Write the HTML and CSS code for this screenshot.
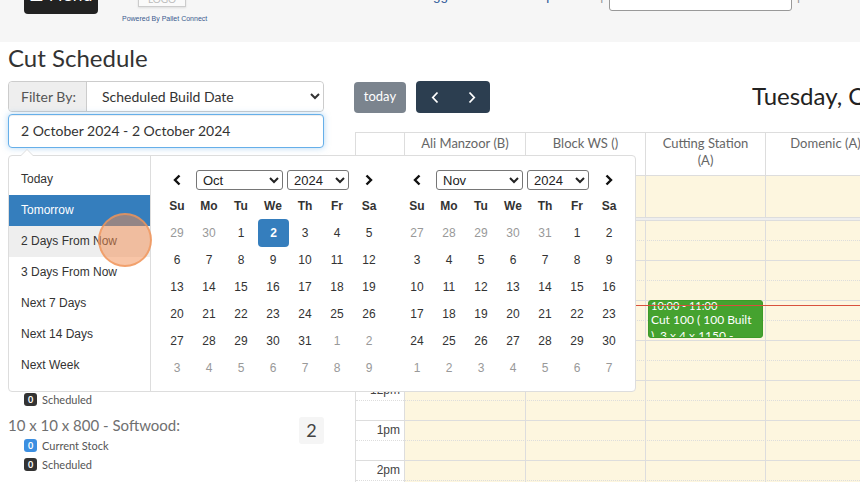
FILE: index.html
```html
<!DOCTYPE html>
<html lang="en">
<head>
    <meta charset="UTF-8">
    <meta name="viewport" content="width=device-width, initial-scale=1.0">
    <title>Cut Schedule</title>
    <link rel="stylesheet" href="styles.css">
</head>
<body>

<div class="topbar">
    <button class="menu-btn">&#9776; Menu</button>
    <div class="brand">
        <div class="logo">LOGO</div>
        <div class="powered">Powered By Pallet Connect</div>
    </div>
    <div class="account">
        <a href="#" class="account-link">Logged in As Gus Mcpherson</a>
        <span class="sep">|</span>
        <select class="company-select"><option>Pallet Connect Demo</option></select>
        <span class="sep">|</span>
        <a href="#" class="account-link">Pallet Connect Support</a>
    </div>
</div>

<div class="page">
    <div class="sidebar">
        <h1 class="page-title">Cut Schedule</h1>

        <div class="input-group">
            <span class="addon">Filter By:</span>
            <select class="filter-select"><option>Scheduled Build Date</option></select>
        </div>

        <div class="range-field">
            <input class="date-range" type="text" value="2 October 2024 - 2 October 2024">

            <!-- date range picker dropdown -->
            <div class="picker">
                <ul class="ranges">
                    <li>Today</li>
                    <li class="active">Tomorrow</li>
                    <li class="hover">2 Days From Now</li>
                    <li>3 Days From Now</li>
                    <li>Next 7 Days</li>
                    <li>Next 14 Days</li>
                    <li>Next Week</li>
                </ul>

                <div class="month">
                    <div class="month-head">
                        <span class="nav"><svg width="8" height="12" viewBox="0 0 8 12"><path d="M6.5 1.5 2 6l4.5 4.5" fill="none" stroke="#111" stroke-width="2.4"/></svg></span>
                        <select class="month-select"><option>Oct</option></select>
                        <select class="year-select"><option>2024</option></select>
                        <span class="nav"><svg width="8" height="12" viewBox="0 0 8 12"><path d="M1.5 1.5 6 6l-4.5 4.5" fill="none" stroke="#111" stroke-width="2.4"/></svg></span>
                    </div>
                    <div class="days">
                        <span class="dow">Su</span><span class="dow">Mo</span><span class="dow">Tu</span><span class="dow">We</span><span class="dow">Th</span><span class="dow">Fr</span><span class="dow">Sa</span>
                        <span class="off">29</span><span class="off">30</span><span>1</span><span class="sel">2</span><span>3</span><span>4</span><span>5</span>
                        <span>6</span><span>7</span><span>8</span><span>9</span><span>10</span><span>11</span><span>12</span>
                        <span>13</span><span>14</span><span>15</span><span>16</span><span>17</span><span>18</span><span>19</span>
                        <span>20</span><span>21</span><span>22</span><span>23</span><span>24</span><span>25</span><span>26</span>
                        <span>27</span><span>28</span><span>29</span><span>30</span><span>31</span><span class="off">1</span><span class="off">2</span>
                        <span class="off">3</span><span class="off">4</span><span class="off">5</span><span class="off">6</span><span class="off">7</span><span class="off">8</span><span class="off">9</span>
                    </div>
                </div>

                <div class="month month-right">
                    <div class="month-head">
                        <span class="nav"><svg width="8" height="12" viewBox="0 0 8 12"><path d="M6.5 1.5 2 6l4.5 4.5" fill="none" stroke="#111" stroke-width="2.4"/></svg></span>
                        <select class="month-select"><option>Nov</option></select>
                        <select class="year-select"><option>2024</option></select>
                        <span class="nav"><svg width="8" height="12" viewBox="0 0 8 12"><path d="M1.5 1.5 6 6l-4.5 4.5" fill="none" stroke="#111" stroke-width="2.4"/></svg></span>
                    </div>
                    <div class="days">
                        <span class="dow">Su</span><span class="dow">Mo</span><span class="dow">Tu</span><span class="dow">We</span><span class="dow">Th</span><span class="dow">Fr</span><span class="dow">Sa</span>
                        <span class="off">27</span><span class="off">28</span><span class="off">29</span><span class="off">30</span><span class="off">31</span><span>1</span><span>2</span>
                        <span>3</span><span>4</span><span>5</span><span>6</span><span>7</span><span>8</span><span>9</span>
                        <span>10</span><span>11</span><span>12</span><span>13</span><span>14</span><span>15</span><span>16</span>
                        <span>17</span><span>18</span><span>19</span><span>20</span><span>21</span><span>22</span><span>23</span>
                        <span>24</span><span>25</span><span>26</span><span>27</span><span>28</span><span>29</span><span>30</span>
                        <span class="off">1</span><span class="off">2</span><span class="off">3</span><span class="off">4</span><span class="off">5</span><span class="off">6</span><span class="off">7</span>
                    </div>
                </div>

                <!-- recorded pointer -->
                <div class="cursor-dot"></div>
            </div>
        </div>

        <div class="stock-list">
            <div class="stock-item">
                <div class="stock-name">22 x 100 x 1200 - Softwood:</div>
                <div class="stock-count">4</div>
                <div class="stock-line"><span class="badge badge-blue">0</span> Current Stock</div>
                <div class="stock-line"><span class="badge">0</span> Scheduled</div>
            </div>
            <div class="stock-item">
                <div class="stock-name">22 x 100 x 1000 - Softwood:</div>
                <div class="stock-count">3</div>
                <div class="stock-line"><span class="badge badge-blue">0</span> Current Stock</div>
                <div class="stock-line"><span class="badge">0</span> Scheduled</div>
            </div>
            <div class="stock-item">
                <div class="stock-name">75 x 75 x 100 - Block:</div>
                <div class="stock-count">9</div>
                <div class="stock-line"><span class="badge badge-blue">0</span> Current Stock</div>
                <div class="stock-line"><span class="badge">0</span> Scheduled</div>
            </div>
            <div class="stock-item">
                <div class="stock-name">3 x 4 x 1150 - Softwood:</div>
                <div class="stock-count">2</div>
                <div class="stock-line"><span class="badge badge-blue">0</span> Current Stock</div>
                <div class="stock-line"><span class="badge">0</span> Scheduled</div>
            </div>
            <div class="stock-item">
                <div class="stock-name">10 x 10 x 800 - Softwood:</div>
                <div class="stock-count">2</div>
                <div class="stock-line"><span class="badge badge-blue">0</span> Current Stock</div>
                <div class="stock-line"><span class="badge">0</span> Scheduled</div>
            </div>
        </div>
    </div>

    <div class="calendar">
        <div class="cal-toolbar">
            <button class="btn-today">today</button>
            <div class="btn-group">
                <button class="btn-nav"><svg width="8" height="13" viewBox="0 0 8 13"><path d="M6.5 1.5 1.8 6.5l4.7 5" fill="none" stroke="#fff" stroke-width="1.8"/></svg></button>
                <button class="btn-nav"><svg width="8" height="13" viewBox="0 0 8 13"><path d="M1.5 1.5 6.2 6.5l-4.7 5" fill="none" stroke="#fff" stroke-width="1.8"/></svg></button>
            </div>
            <h2 class="cal-title">Tuesday, October 1, 2024</h2>
        </div>

        <div class="cal-grid">
            <div class="cal-row cal-head">
                <div class="head-cell"></div>
                <div class="head-cell">Ali Manzoor (B)</div>
                <div class="head-cell">Block WS ()</div>
                <div class="head-cell">Cutting Station (A)</div>
                <div class="head-cell">Domenic (A)</div>
                <div class="head-cell">Jamie (B)</div>
            </div>
            <div class="cal-row cal-allday">
                <div class="axis-cell"></div>
                <div class="day-cell"></div>
                <div class="day-cell"></div>
                <div class="day-cell"></div>
                <div class="day-cell"></div>
                <div class="day-cell"></div>
            </div>
            <div class="cal-divider"></div>

            <div class="cal-body">
                <div class="layer cal-row">
                    <div class="axis-cell"></div>
                    <div class="day-cell"></div>
                    <div class="day-cell"></div>
                    <div class="day-cell"></div>
                    <div class="day-cell"></div>
                    <div class="day-cell"></div>
                </div>

                <div class="layer slats">
                    <div class="slat"><span class="slat-label">8am</span></div>
                    <div class="slat minor"><span class="slat-label"></span></div>
                    <div class="slat"><span class="slat-label">9am</span></div>
                    <div class="slat minor"><span class="slat-label"></span></div>
                    <div class="slat"><span class="slat-label">10am</span></div>
                    <div class="slat minor"><span class="slat-label"></span></div>
                    <div class="slat"><span class="slat-label">11am</span></div>
                    <div class="slat minor"><span class="slat-label"></span></div>
                    <div class="slat"><span class="slat-label">12pm</span></div>
                    <div class="slat minor"><span class="slat-label"></span></div>
                    <div class="slat"><span class="slat-label">1pm</span></div>
                    <div class="slat minor"><span class="slat-label"></span></div>
                    <div class="slat"><span class="slat-label">2pm</span></div>
                    <div class="slat minor"><span class="slat-label"></span></div>
                </div>

                <div class="layer cal-row events">
                    <div></div>
                    <div class="event-col"></div>
                    <div class="event-col"></div>
                    <div class="event-col">
                        <div class="event" style="top: 80px; height: 38px;">
                            <div class="event-time">10:00 - 11:00</div>
                            <div class="event-title">Cut 100 ( 100 Built ), 3 x 4 x 1150 - Softwood</div>
                        </div>
                    </div>
                    <div class="event-col"></div>
                    <div class="event-col"></div>
                    <div class="now-line" style="top: 85px;"></div>
                </div>
            </div>
        </div>
    </div>
</div>

</body>
</html>
```

FILE: styles.css
```css
html, body {
    margin: 0;
    overflow: hidden;
}
body {
    font-family: Lato, "Open Sans", sans-serif;
    color: #333;
    background: #fff;
}

/* top bar (page is scrolled a little, so it is cut off at the top) */
.topbar {
    display: flex;
    align-items: flex-start;
    height: 42px;
    background: #f6f6f6;
}
.topbar > * {
    flex: none;
}
.menu-btn {
    display: flex;
    align-items: flex-end;
    justify-content: center;
    margin: -20px 0 0 24px;
    width: 74px;
    height: 34px;
    padding: 0 0 9px;
    border: none;
    border-radius: 4px;
    background: #222;
    color: #fff;
    font-family: "DejaVu Sans", sans-serif;
    font-size: 16px;
    line-height: 18px;
}
.brand {
    margin: -17px 0 0 24px;
    width: 80px;
    text-align: center;
}
.logo {
    display: inline-block;
    width: 46px;
    height: 22px;
    line-height: 30px;
    border: 1px solid #ccc;
    background: #fafafa;
    color: #bbb;
    font-size: 10px;
    box-shadow: 0 1px 2px rgba(0, 0, 0, 0.1);
}
.powered {
    margin-top: 7px;
    line-height: 10px;
    font-family: "Liberation Sans", Arial, sans-serif;
    font-size: 7px;
    color: #3b5b8f;
    white-space: nowrap;
}
.account {
    display: flex;
    align-items: center;
    gap: 5px;
    margin: -20px 0 0 216px;
    height: 31px;
    white-space: nowrap;
    font-family: "Liberation Sans", Arial, sans-serif;
    font-size: 13.5px;
}
.account-link {
    color: #2a5597;
    text-decoration: none;
}
.sep {
    color: #999;
}
.company-select {
    width: 183px;
    height: 31px;
    border: 1px solid #999;
    border-radius: 3px;
    background: #fff;
    font-size: 13px;
}

/* page */
.page {
    display: flex;
    gap: 30px;
    padding: 0 8px;
}
.sidebar {
    flex: none;
    width: 316px;
}
.page-title {
    margin: 0 0 8px;
    font-size: 24px;
    font-weight: 400;
    line-height: 31px;
    color: #333;
}
.input-group {
    display: flex;
    height: 31px;
    box-sizing: border-box;
    border: 1px solid #ccc;
    border-radius: 4px;
}
.addon {
    display: flex;
    align-items: center;
    width: 78px;
    box-sizing: border-box;
    padding-left: 12px;
    background: #eee;
    border-right: 1px solid #ccc;
    border-radius: 4px 0 0 4px;
    font-size: 14px;
    color: #555;
}
.filter-select {
    flex: 1;
    border: none;
    border-radius: 0 4px 4px 0;
    background: #fff;
    padding-left: 11px;
    font-family: Lato, sans-serif;
    font-size: 14px;
    color: #333;
}
.range-field {
    position: relative;
    margin-top: 2px;
}
.date-range {
    display: block;
    width: 100%;
    height: 34px;
    box-sizing: border-box;
    padding: 0 12px 2px;
    border: 1px solid #66afe9;
    border-radius: 4px;
    box-shadow: inset 0 1px 1px rgba(0, 0, 0, 0.075), 0 0 6px rgba(102, 175, 233, 0.5);
    font-family: Lato, sans-serif;
    font-size: 14px;
    color: #333;
    outline: none;
}

/* date range picker */
.picker {
    position: absolute;
    top: calc(100% + 7px);
    left: 0;
    z-index: 10;
    display: flex;
    align-items: flex-start;
    background: #fff;
    border: 1px solid #ddd;
    border-radius: 4px;
    font-family: "Liberation Sans", Arial, sans-serif;
    font-size: 12px;
    color: #333;
}
.picker::before,
.picker::after {
    content: "";
    position: absolute;
    border-left: 7px solid transparent;
    border-right: 7px solid transparent;
}
.picker::before {
    top: -7px;
    left: 11px;
    border-bottom: 7px solid #ddd;
}
.picker::after {
    top: -6px;
    left: 12px;
    border-left-width: 6px;
    border-right-width: 6px;
    border-bottom: 6px solid #fff;
}
.ranges {
    list-style: none;
    align-self: stretch;
    width: 141px;
    margin: 0;
    padding: 8px 0 0;
    border-right: 1px solid #ddd;
}
.ranges li {
    height: 31px;
    line-height: 31px;
    padding: 0 12px;
}
.ranges li.active {
    background: #357ebd;
    color: #fff;
}
.ranges li.hover {
    background: #eee;
}
.month {
    width: 224px;
    margin-left: 10px;
    padding: 12px 0 10px;
}
.month-right {
    margin-left: 16px;
    margin-right: 10px;
}
.month-head {
    display: flex;
    align-items: center;
    height: 24px;
}
.nav {
    display: flex;
    justify-content: center;
    width: 32px;
}
.month-select,
.year-select {
    height: 20px;
    padding: 0 2px;
    border: 1px solid #767676;
    border-radius: 3px;
    background: #fff;
    font-family: "Liberation Sans", Arial, sans-serif;
    font-size: 13px;
    color: #222;
}
.month-select {
    width: 87px;
    margin-left: 3px;
}
.year-select {
    width: 62px;
    margin: 0 4px;
}
.days {
    display: grid;
    grid-template-columns: repeat(7, 32px);
    grid-auto-rows: 27px;
}
.days span {
    display: flex;
    align-items: center;
    justify-content: center;
}
.days .dow {
    font-weight: bold;
}
.days .off {
    color: #999;
}
.days .sel {
    margin: 0 0 -1px 1px;
    background: #357ebd;
    color: #fff;
    font-weight: bold;
    border-radius: 4px;
}
.cursor-dot {
    position: absolute;
    left: 89px;
    top: 57px;
    width: 54px;
    height: 54px;
    box-sizing: border-box;
    border-radius: 50%;
    border: 2px solid rgba(240, 150, 90, 0.75);
    background: rgba(242, 140, 80, 0.5);
}

/* stock list under the filters */
.stock-list {
    margin-top: 6px;
}
.stock-item {
    display: grid;
    grid-template-columns: 1fr auto;
    margin-bottom: 5px;
}
.stock-name {
    line-height: 22px;
    font-size: 15px;
    color: #707070;
}
.stock-count {
    grid-column: 2;
    grid-row: 1 / span 3;
    align-self: start;
    width: 25px;
    height: 27px;
    margin-top: 3px;
    line-height: 27px;
    text-align: center;
    background: #f5f5f5;
    border-radius: 3px;
    font-size: 18px;
    color: #444;
}
.stock-line {
    grid-column: 1;
    display: flex;
    align-items: center;
    gap: 5px;
    height: 19px;
    padding-left: 16px;
    font-size: 11px;
    color: #555;
}
.badge {
    min-width: 13px;
    height: 13px;
    line-height: 13px;
    border-radius: 3px;
    background: #333;
    color: #fff;
    font-size: 9px;
    font-weight: bold;
    text-align: center;
}
.badge-blue {
    background: #3c8fe1;
}

/* calendar */
.calendar {
    flex: none;
    width: 1100px;
    padding-top: 39px;
}
.cal-toolbar {
    display: flex;
    align-items: center;
    height: 32px;
}
.btn-today {
    width: 52px;
    height: 31px;
    padding: 0 0 2px;
    border: none;
    border-radius: 4px;
    background: #7b848e;
    color: #fff;
    font-family: Lato, sans-serif;
    font-size: 13px;
}
.btn-group {
    display: flex;
    margin-left: 10px;
    background: #2c3e50;
    border-radius: 4px;
}
.btn-nav {
    display: flex;
    align-items: center;
    justify-content: center;
    width: 37px;
    height: 32px;
    border: none;
    background: transparent;
}
.cal-title {
    margin: -4px 0 0 262px;
    font-size: 24px;
    font-weight: 400;
    color: #222;
    white-space: nowrap;
}
.cal-grid {
    margin: 19px 0 0 1px;
    border-left: 1px solid #ddd;
}
.cal-row {
    display: grid;
    grid-template-columns: 49px 121px 120px 120px 120px 120px;
}
.cal-head {
    border-top: 1px solid #ddd;
    border-bottom: 1px solid #ddd;
    height: 44px;
    box-sizing: border-box;
}
.head-cell {
    padding: 2px 10px 0;
    border-right: 1px solid #ddd;
    text-align: center;
    font-size: 13px;
    line-height: 17px;
    color: #666;
}
.cal-allday {
    height: 41px;
}
.axis-cell {
    border-right: 1px solid #ddd;
    background: #fff;
}
.day-cell {
    border-right: 1px solid #ddd;
    background: #fdf6df;
}
.cal-divider {
    height: 3px;
    box-sizing: border-box;
    border-top: 1px solid #ddd;
    background: #eee;
}
.cal-body {
    display: grid;
}
.layer {
    grid-area: 1 / 1;
}
.slat {
    display: flex;
    height: 20px;
    box-sizing: border-box;
    border-top: 1px solid #ddd;
}
.slat.minor {
    border-top-style: dotted;
}
.slat-label {
    width: 49px;
    box-sizing: border-box;
    padding-right: 5px;
    text-align: right;
    line-height: 19px;
    font-family: "Liberation Sans", Arial, sans-serif;
    font-size: 12px;
    color: #444;
}
.events {
    position: relative;
}
.event-col {
    position: relative;
}
.event {
    position: absolute;
    left: 2px;
    right: 3px;
    overflow: hidden;
    box-sizing: border-box;
    padding: 0 2px;
    background: #45a22f;
    border: 1px solid #3d9a28;
    border-radius: 3px;
    color: #fff;
}
.event-time {
    margin-top: -2px;
    font-size: 11px;
    line-height: 13px;
}
.event-title {
    font-size: 12px;
    line-height: 16px;
}
.now-line {
    position: absolute;
    z-index: 2;
    left: 49px;
    right: 0;
    height: 0;
    border-top: 1px solid #d9503c;
}
```
